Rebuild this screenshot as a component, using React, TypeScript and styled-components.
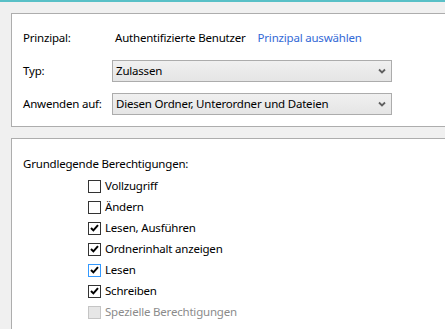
import { createGlobalStyle, styled } from "styled-components";

const GlobalStyle = createGlobalStyle`
  html, body {
    margin: 0;
    padding: 0;
    background: #f0f0f0;
  }
  body {
    font-family: "Noto Sans", "Open Sans", sans-serif;
    font-size: 11.5px;
    letter-spacing: -0.2px;
    color: #000;
  }
`;

const Window = styled.div`
  width: 445px;
  height: 329px;
  box-sizing: border-box;
  overflow: hidden;
  border-top: 2px solid #59c0c7;
  padding: 11px 0 0 11px;
  background: #f0f0f0;
`;

const Panel = styled.section<{ $height?: number }>`
  width: 450px;
  box-sizing: border-box;
  background: #fff;
  border: 1px solid #adadad;
  height: ${({ $height }) => ($height ? `${$height}px` : "auto")};
  & + & {
    margin-top: 11px;
  }
`;

const FormGrid = styled.div`
  display: grid;
  grid-template-columns: 89px 280px;
  grid-auto-rows: 22px;
  row-gap: 11px;
  align-items: center;
  padding: 13px 0 0 11px;
`;

const Label = styled.span`
  line-height: 16px;
`;

const ValueRow = styled.div`
  display: flex;
  gap: 12px;
  padding-left: 3px;
  line-height: 16px;
`;

const Link = styled.span`
  color: #3369d6;
`;

const Select = styled.div`
  display: flex;
  align-items: center;
  justify-content: space-between;
  height: 22px;
  box-sizing: border-box;
  border: 1px solid #acacac;
  background: linear-gradient(180deg, #f0f0f0 0%, #e5e5e5 100%);
  padding: 0 5px 0 3px;
  line-height: 16px;
`;

const Chevron = () => (
  <svg width="8" height="6" viewBox="0 0 8 6">
    <polyline
      points="1,1.5 4,4.5 7,1.5"
      fill="none"
      stroke="#606060"
      strokeWidth="1.8"
    />
  </svg>
);

const Heading = styled.div`
  padding: 17px 0 0 11px;
  line-height: 16px;
`;

const CheckList = styled.ul`
  list-style: none;
  margin: 0;
  padding: 6px 0 0 76px;
  display: flex;
  flex-direction: column;
  gap: 5px;
`;

const CheckRow = styled.li<{ $disabled?: boolean }>`
  display: flex;
  align-items: center;
  gap: 4px;
  height: 16px;
  line-height: 16px;
  color: ${({ $disabled }) => ($disabled ? "#8b8b8b" : "#000")};
`;

const Box = styled.span<{ $focus?: boolean; $disabled?: boolean }>`
  width: 13px;
  height: 13px;
  box-sizing: border-box;
  display: flex;
  align-items: center;
  justify-content: center;
  border: 1px solid
    ${({ $focus, $disabled }) =>
      $disabled ? "#c5c5c5" : $focus ? "#3399ff" : "#333333"};
  background: ${({ $disabled }) => ($disabled ? "#e6e6e6" : "#fff")};
`;

const Tick = () => (
  <svg width="9" height="8" viewBox="0 0 9 8">
    <polyline
      points="1,4 3.4,6.4 8,1.2"
      fill="none"
      stroke="#000"
      strokeWidth="2"
    />
  </svg>
);

type Perm = { label: string; checked?: boolean; focus?: boolean; disabled?: boolean };

const perms: Perm[] = [
  { label: "Vollzugriff" },
  { label: "Ändern" },
  { label: "Lesen, Ausführen", checked: true },
  { label: "Ordnerinhalt anzeigen", checked: true },
  { label: "Lesen", checked: true, focus: true },
  { label: "Schreiben", checked: true },
  { label: "Spezielle Berechtigungen", disabled: true },
];

export default function App() {
  return (
    <Window>
      <GlobalStyle />
      <Panel $height={114}>
        <FormGrid>
          <Label>Prinzipal:</Label>
          <ValueRow>
            <span>Authentifizierte Benutzer</span>
            <Link>Prinzipal auswählen</Link>
          </ValueRow>
          <Label>Typ:</Label>
          <Select>
            <span>Zulassen</span>
            <Chevron />
          </Select>
          <Label>Anwenden auf:</Label>
          <Select>
            <span>Diesen Ordner, Unterordner und Dateien</span>
            <Chevron />
          </Select>
        </FormGrid>
      </Panel>
      <Panel $height={200}>
        <Heading>Grundlegende Berechtigungen:</Heading>
        <CheckList>
          {perms.map((p) => (
            <CheckRow key={p.label} $disabled={p.disabled}>
              <Box $focus={p.focus} $disabled={p.disabled}>
                {p.checked && <Tick />}
              </Box>
              <span>{p.label}</span>
            </CheckRow>
          ))}
        </CheckList>
      </Panel>
    </Window>
  );
}
